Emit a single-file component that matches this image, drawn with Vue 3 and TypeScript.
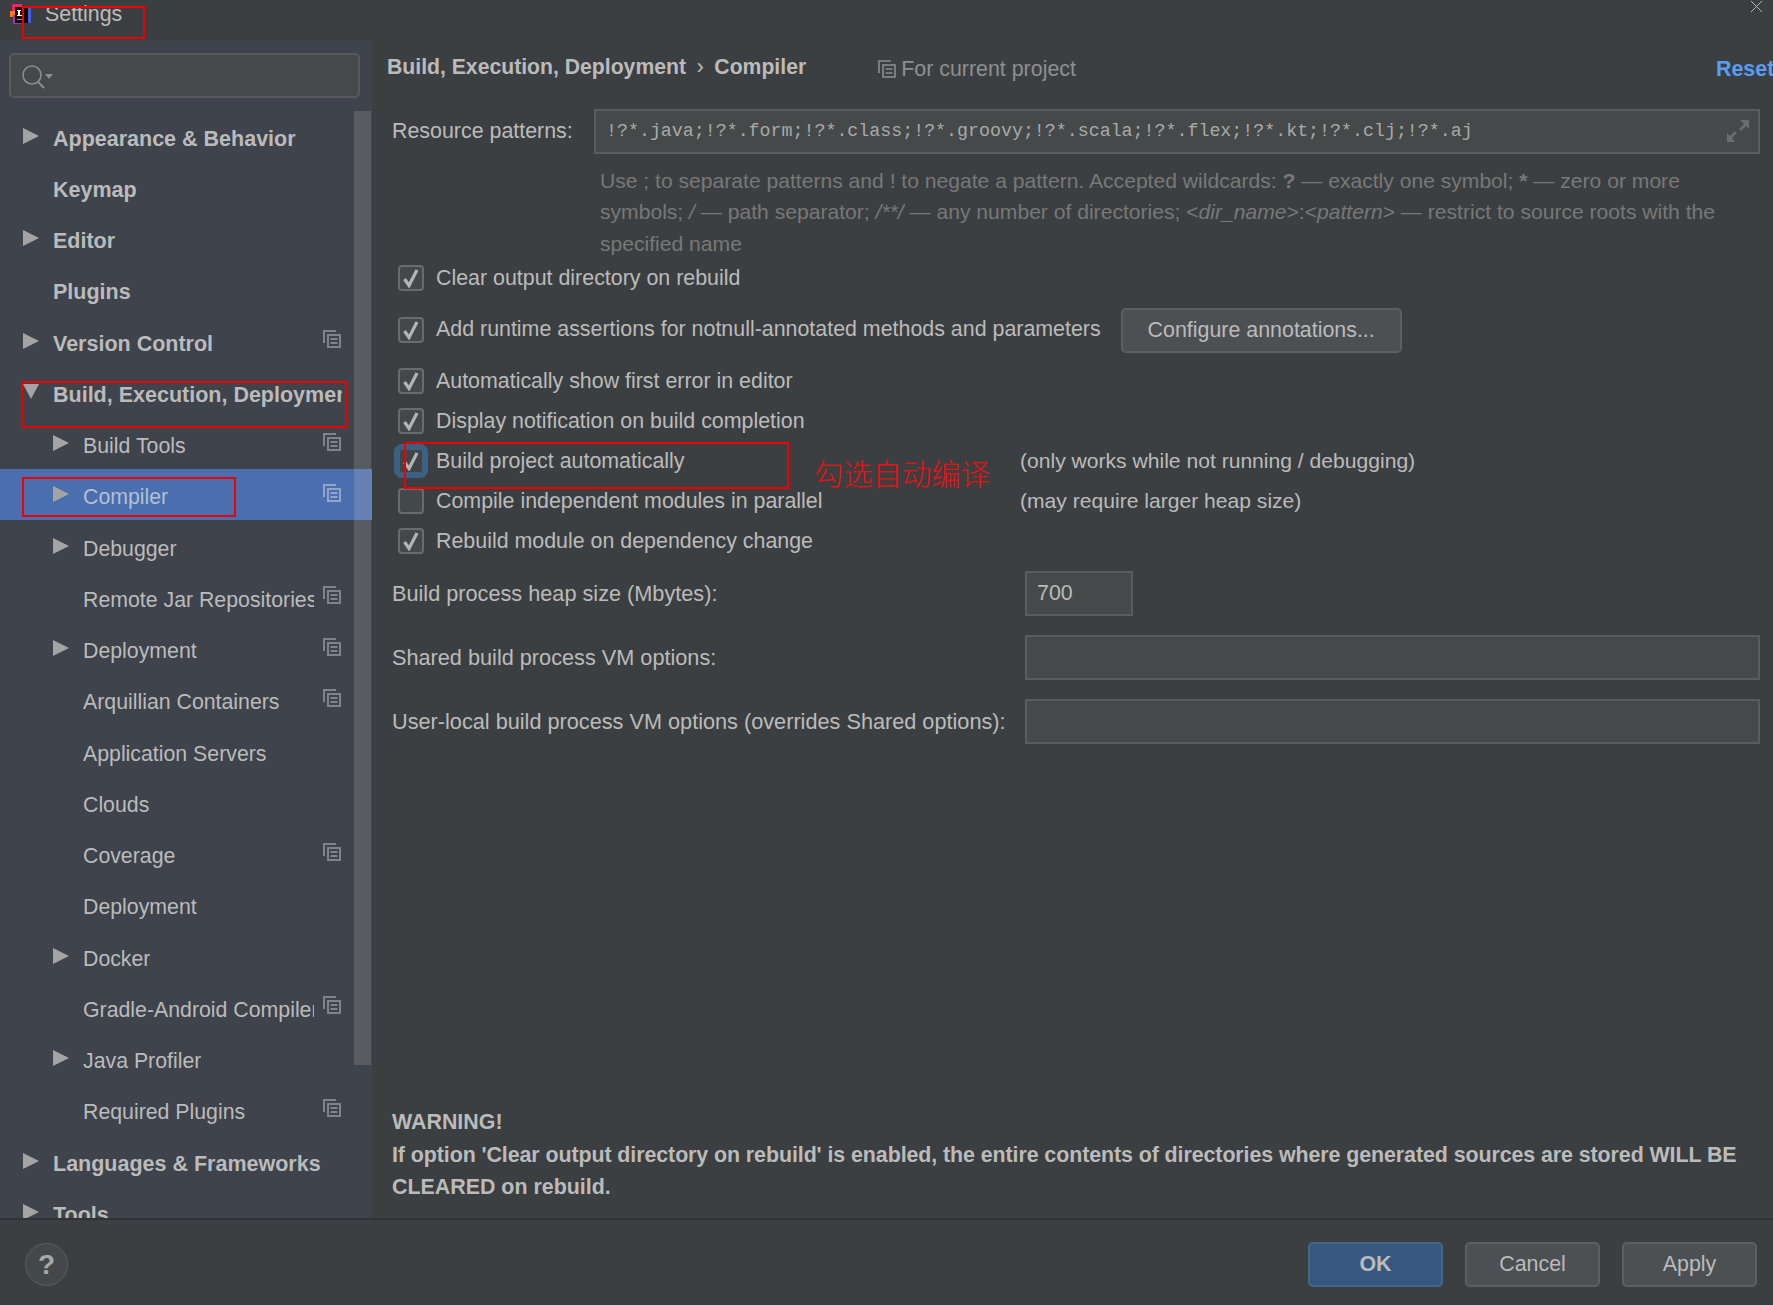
<script setup lang="ts">
interface TreeRow {
  label: string
  child?: boolean
  arrow?: boolean
  open?: boolean
  copy?: boolean
  selected?: boolean
}

interface CheckRow {
  label: string
  checked: boolean
  focus?: boolean
  note?: string
  button?: string
}

const treeRows: TreeRow[] = [
  { label: 'Appearance & Behavior', arrow: true },
  { label: 'Keymap' },
  { label: 'Editor', arrow: true },
  { label: 'Plugins' },
  { label: 'Version Control', arrow: true, copy: true },
  { label: 'Build, Execution, Deployment', arrow: true, open: true },
  { label: 'Build Tools', child: true, arrow: true, copy: true },
  { label: 'Compiler', child: true, arrow: true, copy: true, selected: true },
  { label: 'Debugger', child: true, arrow: true },
  { label: 'Remote Jar Repositories', child: true, copy: true },
  { label: 'Deployment', child: true, arrow: true, copy: true },
  { label: 'Arquillian Containers', child: true, copy: true },
  { label: 'Application Servers', child: true },
  { label: 'Clouds', child: true },
  { label: 'Coverage', child: true, copy: true },
  { label: 'Deployment', child: true },
  { label: 'Docker', child: true, arrow: true },
  { label: 'Gradle-Android Compiler', child: true, copy: true },
  { label: 'Java Profiler', child: true, arrow: true },
  { label: 'Required Plugins', child: true, copy: true },
  { label: 'Languages & Frameworks', arrow: true },
  { label: 'Tools', arrow: true },
]

const checkRows: CheckRow[] = [
  { label: 'Clear output directory on rebuild', checked: true },
  {
    label: 'Add runtime assertions for notnull-annotated methods and parameters',
    checked: true,
    button: 'Configure annotations...',
  },
  { label: 'Automatically show first error in editor', checked: true },
  { label: 'Display notification on build completion', checked: true },
  {
    label: 'Build project automatically',
    checked: true,
    focus: true,
    note: '(only works while not running / debugging)',
  },
  {
    label: 'Compile independent modules in parallel',
    checked: false,
    note: '(may require larger heap size)',
  },
  { label: 'Rebuild module on dependency change', checked: true },
]
</script>

<template>
  <div class="dialog">
    <header class="titlebar">
      <svg class="logo" width="22" height="24" viewBox="0 0 22 24">
        <rect x="2" y="1" width="10" height="10" fill="#f0265f" />
        <rect x="0" y="8" width="6" height="6" fill="#f97a12" />
        <rect x="3" y="12" width="8" height="9" fill="#a533a8" />
        <rect x="15" y="5" width="6" height="15" fill="#3f5fe0" />
        <rect x="5" y="4" width="13" height="16" fill="#0a0a0a" />
        <rect x="7" y="7" width="4" height="1" fill="#fff" />
        <rect x="8" y="7" width="2" height="6" fill="#fff" />
        <rect x="7" y="12" width="7" height="1" fill="#fff" />
        <rect x="7" y="16" width="6" height="1" fill="#999" />
      </svg>
      <span class="title">Settings</span>
      <svg class="close" width="14" height="14" viewBox="0 0 14 14">
        <path d="M1 1l11 11M12 1L1 12" stroke="#b5b5b5" stroke-width="1" fill="none" />
      </svg>
      <div class="mark mark-title"></div>
    </header>

    <div class="body">
      <aside class="sidebar">
        <div class="search">
          <svg width="34" height="28" viewBox="0 0 34 28">
            <circle cx="12" cy="12" r="9" fill="none" stroke="#8b8e90" stroke-width="1.6" />
            <path d="M18 19l6 6" stroke="#8b8e90" stroke-width="2" />
            <path d="M25 11h8l-4 5z" fill="#8b8e90" />
          </svg>
        </div>
        <div class="tree-wrap">
          <div class="tree">
            <div
              v-for="row in treeRows"
              :key="row.label + row.child"
              class="tree-row"
              :class="{ selected: row.selected, child: row.child, top: !row.child }"
            >
              <span class="arrow-slot">
                <svg v-if="row.arrow" width="16" height="16" viewBox="0 0 16 16">
                  <path :d="row.open ? 'M0 0h16l-8 15z' : 'M0 0l16 8-16 8z'" fill="#a4a4a4" />
                </svg>
              </span>
              <span class="tree-label">{{ row.label }}</span>
              <svg v-if="row.copy" class="copy" width="18" height="18" viewBox="0 0 18 18">
                <path d="M13 1H1v12" fill="none" stroke="currentColor" stroke-width="2" />
                <rect x="5" y="5" width="12" height="12" fill="none" stroke="currentColor" stroke-width="2" />
                <path d="M7.500 9h7M7.500 13h7" stroke="currentColor" stroke-width="2" />
              </svg>
            </div>
          </div>
          <div class="scrollbar"></div>
          <div class="scroll-selected"></div>
          <div class="mark mark-build"></div>
          <div class="mark mark-compiler"></div>
        </div>
      </aside>

      <main class="content">
        <div class="crumbs">
          <span class="crumb">Build, Execution, Deployment</span>
          <span class="crumb-sep">›</span>
          <span class="crumb">Compiler</span>
          <span class="scope">
            <svg width="18" height="18" viewBox="0 0 18 18">
              <path d="M13 1H1v12" fill="none" stroke="#8c8c8c" stroke-width="1.600" />
              <rect x="5" y="5" width="12" height="12" fill="none" stroke="#8c8c8c" stroke-width="1.600" />
              <path d="M7.500 9h7M7.500 13h7" stroke="#8c8c8c" stroke-width="1.600" />
            </svg>
            For current project
          </span>
          <a class="reset">Reset</a>
        </div>

        <div class="resource">
          <label class="resource-label">Resource patterns:</label>
          <div class="field mono">
            <span>!?*.java;!?*.form;!?*.class;!?*.groovy;!?*.scala;!?*.flex;!?*.kt;!?*.clj;!?*.aj</span>
            <svg width="24" height="24" viewBox="0 0 24 24">
              <path d="M14 1h9v9l-3-3-5 5-2-2 5-5z M1 23v-9l3 3 5-5 2 2-5 5 3 4z" fill="#6a6d6f" />
            </svg>
          </div>
        </div>

        <p class="help">
          Use ; to separate patterns and ! to negate a pattern. Accepted wildcards: <b>?</b> — exactly one symbol; <b>*</b> — zero or more<br />
          symbols; <i>/</i> — path separator; <i>/**/</i> — any number of directories; &lt;<i>dir_name</i>&gt;:&lt;<i>pattern</i>&gt; — restrict to source roots with the<br />
          specified name
        </p>

        <div class="checks">
          <div v-for="row in checkRows" :key="row.label" class="check-row" :class="{ tall: row.button }">
            <span class="box" :class="{ focus: row.focus }">
              <svg v-if="row.checked" width="18" height="20" viewBox="0 0 18 20">
                <path d="M2.500 11l4.500 6.500L15 2" fill="none" stroke="#b4b4b4" stroke-width="3.200" />
              </svg>
            </span>
            <span class="check-label" :class="{ 'has-note': row.note }">{{ row.label }}</span>
            <span v-if="row.note" class="note">{{ row.note }}</span>
            <button v-if="row.button" class="btn configure">{{ row.button }}</button>
          </div>
          <div class="mark mark-auto"></div>
          <div class="annotation">勾选自动编译</div>
        </div>

        <div class="form">
          <div class="form-row">
            <label>Build process heap size (Mbytes):</label>
            <div class="field small">700</div>
          </div>
          <div class="form-row">
            <label>Shared build process VM options:</label>
            <div class="field wide"></div>
          </div>
          <div class="form-row">
            <label>User-local build process VM options (overrides Shared options):</label>
            <div class="field wide"></div>
          </div>
        </div>

        <div class="warning">
          <div>WARNING!</div>
          <div class="warning-body">If option 'Clear output directory on rebuild' is enabled, the entire contents of directories where generated sources are stored WILL BE</div>
          <div>CLEARED on rebuild.</div>
        </div>
      </main>
    </div>

    <footer class="footer">
      <span class="help-btn">?</span>
      <div class="actions">
        <button class="btn primary">OK</button>
        <button class="btn">Cancel</button>
        <button class="btn">Apply</button>
      </div>
    </footer>
  </div>
</template>

<style>
html,
body {
  margin: 0;
  background: #3c3f41;
}
</style>

<style scoped>
.dialog {
  position: relative;
  width: 1773px;
  height: 1305px;
  display: flex;
  flex-direction: column;
  overflow: hidden;
  background: #3c3f41;
  color: #bbbbbb;
  font-family: "Liberation Sans", Arial, sans-serif;
  font-size: 21.4px;
}

.titlebar {
  position: relative;
  flex: 0 0 40px;
  display: flex;
  align-items: flex-start;
  background: #3c3f41;
}

.logo {
  margin: 3px 0 0 10px;
}

.title {
  margin-left: 13px;
  line-height: 29px;
}

.close {
  position: absolute;
  right: 9px;
  top: 0;
}

.mark {
  position: absolute;
  border: 2px solid #ee0000;
  box-sizing: border-box;
  pointer-events: none;
}

.mark-title {
  left: 22px;
  top: 6px;
  width: 123px;
  height: 33px;
}

.body {
  flex: 1;
  display: flex;
  min-height: 0;
}

.sidebar {
  flex: 0 0 372px;
  display: flex;
  flex-direction: column;
  overflow: hidden;
  background: #3e434c;
}

.search {
  flex: 0 0 auto;
  box-sizing: border-box;
  width: 351px;
  height: 45px;
  margin: 13px 0 13px 9px;
  padding: 8px 0 0 9px;
  background: #45494a;
  border: 2px solid #565a5c;
  border-radius: 5px;
}

.tree-wrap {
  position: relative;
  flex: 1;
  min-height: 0;
}

.tree {
  margin-top: -1px;
}

.tree-row {
  position: relative;
  height: 51.25px;
  display: flex;
  align-items: center;
}

.tree-row.selected {
  background: #4b6eaf;
}

.arrow-slot {
  display: flex;
  width: 30px;
  height: 16px;
  flex: 0 0 auto;
}

.top .arrow-slot {
  margin-left: 23px;
}

.child .arrow-slot {
  margin-left: 53px;
  width: 30px;
}

.tree-label {
  padding-top: 7px;
  white-space: nowrap;
  overflow: hidden;
}

.top .tree-label {
  font-size: 21.5px;
  font-weight: 700;
  max-width: 289px;
}

.child .tree-label {
  font-size: 21.3px;
  max-width: 231px;
}

.copy {
  position: absolute;
  left: 323px;
  top: 15px;
  color: #7c858e;
}

.selected .tree-label {
  color: #b4bfd2;
}

.selected .copy {
  color: #93a5c6;
}

.scrollbar {
  position: absolute;
  left: 354px;
  top: 0;
  width: 17px;
  height: 954px;
  background: #595b62;
}

.scroll-selected {
  position: absolute;
  left: 354px;
  top: 357.75px;
  width: 18px;
  height: 51.25px;
  background: #6780b5;
}

.mark-build {
  left: 21px;
  top: 270px;
  width: 326px;
  height: 47px;
}

.mark-compiler {
  left: 22px;
  top: 366px;
  width: 214px;
  height: 40px;
}

.content {
  flex: 1;
  min-width: 0;
  padding: 0 13px 0 15px;
  position: relative;
}

.crumbs {
  display: flex;
  align-items: center;
  height: 54px;
  margin-bottom: 14.5px;
  white-space: nowrap;
}

.crumb {
  font-weight: 700;
  font-size: 21.2px;
}

.crumb-sep {
  margin: 0 10.5px;
  font-size: 22px;
}

.scope {
  display: flex;
  align-items: center;
  gap: 5px;
  margin-left: 72px;
  margin-top: 4px;
  color: #8f8f8f;
}

.reset {
  margin-left: auto;
  margin-right: -13px;
  margin-top: 4px;
  color: #589df6;
  font-weight: 700;
  width: 57px;
  overflow: hidden;
}

.resource {
  display: flex;
  align-items: center;
  gap: 20px;
  margin-left: 5px;
}

.resource-label {
  width: 182px;
  flex: 0 0 auto;
  white-space: nowrap;
}

.field {
  box-sizing: border-box;
  background: #45494a;
  border: 2px solid #5a5d5f;
  height: 45px;
  display: flex;
  align-items: center;
  padding-left: 10px;
}

.mono {
  flex: 1;
  justify-content: space-between;
  padding-right: 8px;
  font-family: "Liberation Mono", monospace;
  font-size: 18.3px;
  color: #a9a9a9;
}

.help {
  margin: 11px 0 0 213px;
  color: #787878;
  font-size: 21.1px;
  line-height: 31.5px;
  white-space: nowrap;
}

.help b {
  font-weight: 700;
}

.checks {
  position: relative;
  margin: -1px 0 0 11px;
}

.check-row {
  position: relative;
  height: 40px;
  display: flex;
  align-items: center;
}

.check-row.tall {
  height: 63px;
}

.box {
  position: relative;
  box-sizing: border-box;
  width: 26px;
  height: 26px;
  flex: 0 0 auto;
  display: flex;
  align-items: center;
  justify-content: center;
  background: #43494a;
  border: 2px solid #6b6b6b;
  border-radius: 4px;
}

.box.focus {
  background: #3f4446;
  border-color: #3d6185;
  outline: 4px solid #3d6185;
  outline-offset: 0;
}

.check-label {
  margin-left: 12px;
}

.check-label.has-note {
  width: 584px;
  flex: 0 0 auto;
}

.note {
  font-size: 21.1px;
}

.btn {
  box-sizing: border-box;
  height: 45px;
  width: 135px;
  padding: 0;
  font: inherit;
  color: #bbbbbb;
  background: #4c5052;
  border: 2px solid #5e6060;
  border-radius: 5px;
}

.configure {
  width: 281px;
  margin: 2px 0 0 20px;
}

.mark-auto {
  left: 6px;
  top: 184px;
  width: 385px;
  height: 47px;
}

.annotation {
  position: absolute;
  left: 416px;
  top: 193.5px;
  font-family: "Noto Sans CJK SC", sans-serif;
  font-size: 29.3px;
  font-weight: 300;
  line-height: 40px;
  color: #e81010;
  white-space: nowrap;
}

.form {
  margin: 10px 0 0 5px;
}

.form-row {
  display: flex;
  align-items: center;
  height: 45px;
  margin-bottom: 19px;
}

.form-row label {
  width: 633px;
  flex: 0 0 auto;
  font-size: 21.7px;
  white-space: nowrap;
}

.small {
  width: 108px;
}

.wide {
  flex: 1;
}

.warning {
  position: absolute;
  left: 20px;
  top: 1066px;
  font-weight: 700;
  line-height: 32.5px;
  white-space: nowrap;
}

.warning-body {
  letter-spacing: -0.08px;
}

.footer {
  flex: 0 0 87px;
  box-sizing: border-box;
  border-top: 2px solid #323232;
  display: flex;
  align-items: center;
  justify-content: space-between;
  padding: 4px 16px 0 25px;
  background: #3c3f41;
}

.help-btn {
  box-sizing: border-box;
  width: 43px;
  height: 43px;
  display: flex;
  align-items: center;
  justify-content: center;
  border: 1px solid #5d6062;
  border-radius: 50%;
  background: #45484a;
  font-size: 28px;
  font-weight: 700;
  color: #a8a8a8;
}

.actions {
  display: flex;
  gap: 22px;
}

.primary {
  background: #365880;
  border-color: #43688c;
  font-weight: 700;
}
</style>
